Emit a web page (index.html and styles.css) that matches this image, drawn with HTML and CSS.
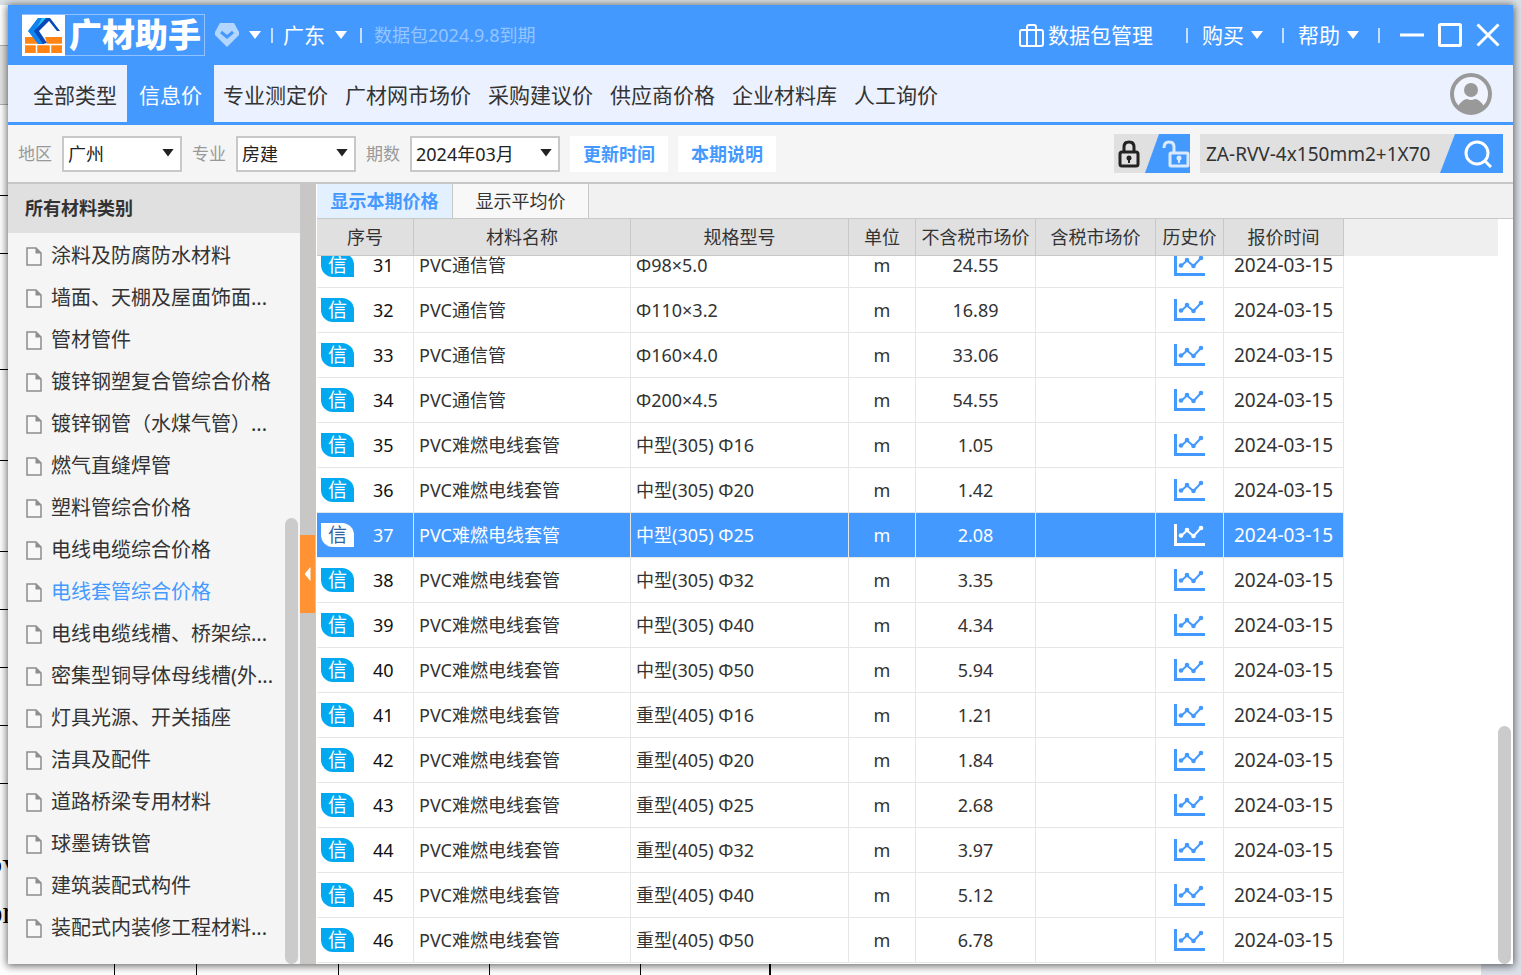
FILE: index.html
```html
<!DOCTYPE html>
<html lang="zh-CN">
<head>
    <meta charset="UTF-8">
    <meta name="viewport" content="width=device-width, initial-scale=1.0">
    <title>广材助手</title>
    <link rel="stylesheet" href="styles.css">
</head>
<body>

    <!-- Shared icons -->
    <svg class="sprite" aria-hidden="true">
        <symbol id="icon-doc" viewBox="0 0 16 19">
            <path d="M1 1H10L15 6V18H1Z" fill="#f8f8f8" stroke="#8c8c8c" stroke-width="1.5"/>
            <path d="M9.5 1V6.5H15Z" fill="#8c8c8c"/>
        </symbol>
        <symbol id="icon-chart" viewBox="0 0 31 22">
            <path d="M1.5 0V20.5H31" fill="none" stroke="currentColor" stroke-width="3"/>
            <path d="M7 12L13 6.500L19.500 12L27 4" fill="none" stroke="currentColor" stroke-width="2"/>
            <g fill="currentColor">
                <circle cx="7" cy="11.500" r="2.300"/>
                <circle cx="13" cy="6" r="2.300"/>
                <circle cx="19.500" cy="12" r="2.300"/>
                <circle cx="27" cy="4" r="2.300"/>
            </g>
        </symbol>
    </svg>

    <!-- Document behind the window -->
    <svg class="backdrop" aria-hidden="true">
        <rect width="100%" height="100%" fill="#ffffff"/>
        <rect width="100%" height="5" fill="#dbe2e6"/>
        <rect y="46" width="8" height="58" fill="#e4e4e4"/>
        <path d="M0 45.500H8M0 104.500H8" stroke="#b0b0b0"/>
        <path d="M0 195.500H8M0 253.500H8M0 369.500H8M0 460.500H8M0 551.500H8M0 609.500H8M0 667.500H8M0 725.500H8M0 783.500H8" stroke="#000000"/>
        <path d="M114.500 960V980M196.500 960V980M338.500 960V980M489.500 960V980M640.500 960V980" stroke="#000000"/>
        <path d="M770 960V980" stroke="#000000" stroke-width="2"/>
        <rect x="1481" y="5" width="60" height="100%" fill="#dce1ea"/>
        <text class="doc-text" x="-15" y="881">PV</text>
        <text class="doc-text" x="-13" y="923">or</text>
    </svg>

    <div class="window">

        <!-- Title bar -->
        <header class="title-bar">
            <a class="logo" href="#">
                <svg width="43" height="41" viewBox="0 0 43 41" aria-hidden="true">
                    <rect width="43" height="41" fill="#ffffff"/>
                    <path d="M3 22H11L17 29H25L31 22H40V38H3Z" fill="#ff8414"/>
                    <path d="M23 22H39L31 29L25 29Z" fill="#ff8414"/>
                    <path d="M3 29.500H40M14.500 29V38M28.500 29V38" stroke="#ffffff" stroke-width="1.5"/>
                    <path d="M16 3H28L17 15L6 17Z" fill="#25c4f5"/>
                    <path d="M6 16L16 3H20L13 16L22 29H16Z" fill="#1183ee"/>
                    <path d="M12 16L21 29L25 28L17 16L27 6L35 16H38L28 3H24Z" fill="#0848b8"/>
                </svg>
                <span class="logo-text">广材助手</span>
            </a>
            <button class="title-button vip" aria-label="会员">
                <svg width="24" height="24" viewBox="0 0 24 24" aria-hidden="true">
                    <path d="M5 0H19L24 9V12L12 24L0 12V9Z" fill="#b3d6ff"/>
                    <path d="M6 9L12 14L18 9" fill="none" stroke="#4499ff" stroke-width="3"/>
                </svg>
                <span class="caret"></span>
            </button>
            <span class="divider"></span>
            <button class="title-button region">广东 <span class="caret"></span></button>
            <span class="divider"></span>
            <span class="expire">数据包2024.9.8到期</span>

            <div class="title-actions">
                <button class="title-button package">
                    <svg width="25" height="23" viewBox="0 0 25 23" fill="none" stroke="#ffffff" stroke-width="2" aria-hidden="true">
                        <rect x="1" y="6" width="23" height="16" rx="2"/>
                        <path d="M8 22V3Q8 1 10 1H15Q17 1 17 3V22"/>
                    </svg>
                    数据包管理
                </button>
                <span class="divider"></span>
                <button class="title-button">购买 <span class="caret"></span></button>
                <span class="divider"></span>
                <button class="title-button">帮助 <span class="caret"></span></button>
                <span class="divider"></span>
            </div>

            <div class="window-controls">
                <button aria-label="最小化">
                    <svg width="24" height="24" viewBox="0 0 24 24"><path d="M0 12H24" stroke="#ffffff" stroke-width="3"/></svg>
                </button>
                <button aria-label="最大化">
                    <svg width="24" height="24" viewBox="0 0 24 24"><rect x="1.500" y="1.500" width="21" height="21" rx="1" fill="none" stroke="#ffffff" stroke-width="3"/></svg>
                </button>
                <button aria-label="关闭">
                    <svg width="24" height="24" viewBox="0 0 24 24"><path d="M1.500 1.500L22.500 22.500M22.500 1.500L1.500 22.500" stroke="#ffffff" stroke-width="3"/></svg>
                </button>
            </div>
        </header>

        <!-- Main navigation -->
        <nav class="main-nav">
            <a class="all" href="#">全部类型</a>
            <a class="active" href="#">信息价</a>
            <a href="#">专业测定价</a>
            <a href="#">广材网市场价</a>
            <a href="#">采购建议价</a>
            <a href="#">供应商价格</a>
            <a href="#">企业材料库</a>
            <a href="#">人工询价</a>
            <button class="avatar" aria-label="用户">
                <svg width="44" height="44" viewBox="0 0 44 44" aria-hidden="true">
                    <clipPath id="avatar-clip"><circle cx="22" cy="22" r="20"/></clipPath>
                    <circle cx="22" cy="22" r="19" fill="#f1f4ff" stroke="#999999" stroke-width="4"/>
                    <circle cx="22" cy="18" r="7" fill="#999999"/>
                    <path d="M9 44V34Q14 27 18 27Q22 29 26 27Q30 27 35 34V44Z" fill="#999999" clip-path="url(#avatar-clip)"/>
                </svg>
            </button>
        </nav>

        <!-- Filters -->
        <form class="filter-bar">
            <label for="region">地区</label>
            <span class="select-box">
                <select id="region"><option>广州</option></select>
            </span>
            <label for="major">专业</label>
            <span class="select-box">
                <select id="major"><option>房建</option></select>
            </span>
            <label for="period">期数</label>
            <span class="select-box wide">
                <select id="period"><option>2024年03月</option></select>
            </span>
            <button type="button" class="text-button">更新时间</button>
            <button type="button" class="text-button">本期说明</button>

            <div class="filter-right">
                <div class="lock-switch">
                    <button type="button" class="lock" aria-label="锁定">
                        <svg width="22" height="28" viewBox="0 0 22 28" aria-hidden="true">
                            <rect x="2" y="12" width="18" height="14" rx="2" fill="none" stroke="#222222" stroke-width="3"/>
                            <path d="M6 12V7Q6 2 11 2Q16 2 16 7V12" fill="none" stroke="#222222" stroke-width="3"/>
                            <circle cx="11" cy="18" r="2.500" fill="#222222"/>
                            <path d="M11 18V23" stroke="#222222" stroke-width="2"/>
                        </svg>
                    </button>
                    <button type="button" class="unlock" aria-label="解锁">
                        <svg width="28" height="28" viewBox="0 0 28 28" aria-hidden="true">
                            <rect x="8" y="13" width="18" height="13" rx="1" fill="none" stroke="#d9eaff" stroke-width="3"/>
                            <path d="M2 8Q2 2 7 2Q12 2 12 7V13" fill="none" stroke="#d9eaff" stroke-width="3"/>
                            <circle cx="17" cy="18" r="2.500" fill="#d9eaff"/>
                            <path d="M17 18V23" stroke="#d9eaff" stroke-width="2"/>
                        </svg>
                    </button>
                </div>
                <div class="search">
                    <input type="text" value="ZA-RVV-4x150mm2+1X70" aria-label="搜索材料">
                    <button type="button" aria-label="搜索">
                        <svg width="28" height="28" viewBox="0 0 28 28" fill="none" stroke="#ffffff" stroke-width="3" aria-hidden="true">
                            <circle cx="13" cy="13" r="11"/>
                            <path d="M20 20L27 27"/>
                        </svg>
                    </button>
                </div>
            </div>
        </form>

        <div class="content">

            <!-- Material categories -->
            <aside class="sidebar">
                <h2>所有材料类别</h2>
                <div class="category-area">
                    <ul class="categories">
                        <li><a href="#"><svg><use href="#icon-doc"/></svg>涂料及防腐防水材料</a></li>
                        <li><a href="#"><svg><use href="#icon-doc"/></svg>墙面、天棚及屋面饰面...</a></li>
                        <li><a href="#"><svg><use href="#icon-doc"/></svg>管材管件</a></li>
                        <li><a href="#"><svg><use href="#icon-doc"/></svg>镀锌钢塑复合管综合价格</a></li>
                        <li><a href="#"><svg><use href="#icon-doc"/></svg>镀锌钢管（水煤气管）...</a></li>
                        <li><a href="#"><svg><use href="#icon-doc"/></svg>燃气直缝焊管</a></li>
                        <li><a href="#"><svg><use href="#icon-doc"/></svg>塑料管综合价格</a></li>
                        <li><a href="#"><svg><use href="#icon-doc"/></svg>电线电缆综合价格</a></li>
                        <li><a class="active" href="#"><svg><use href="#icon-doc"/></svg>电线套管综合价格</a></li>
                        <li><a href="#"><svg><use href="#icon-doc"/></svg>电线电缆线槽、桥架综...</a></li>
                        <li><a href="#"><svg><use href="#icon-doc"/></svg>密集型铜导体母线槽(外...</a></li>
                        <li><a href="#"><svg><use href="#icon-doc"/></svg>灯具光源、开关插座</a></li>
                        <li><a href="#"><svg><use href="#icon-doc"/></svg>洁具及配件</a></li>
                        <li><a href="#"><svg><use href="#icon-doc"/></svg>道路桥梁专用材料</a></li>
                        <li><a href="#"><svg><use href="#icon-doc"/></svg>球墨铸铁管</a></li>
                        <li><a href="#"><svg><use href="#icon-doc"/></svg>建筑装配式构件</a></li>
                        <li><a href="#"><svg><use href="#icon-doc"/></svg>装配式内装修工程材料...</a></li>
                    </ul>
                    <div class="scroll-track"><div class="scroll-thumb category-thumb"></div></div>
                </div>
            </aside>

            <div class="splitter">
                <button aria-label="收起"></button>
            </div>

            <!-- Price table -->
            <main class="prices">
                <div class="tabs">
                    <button class="active">显示本期价格</button>
                    <button>显示平均价</button>
                </div>
                <div class="table-area">
                    <div class="table-scroll" id="table-scroll">
                        <table>
                            <colgroup>
                                <col class="col-index">
                                <col class="col-name">
                                <col class="col-spec">
                                <col class="col-unit">
                                <col class="col-price">
                                <col class="col-price">
                                <col class="col-history">
                                <col class="col-date">
                                <col>
                            </colgroup>
                            <thead>
                                <tr>
                                    <th>序号</th>
                                    <th>材料名称</th>
                                    <th>规格型号</th>
                                    <th>单位</th>
                                    <th>不含税市场价</th>
                                    <th>含税市场价</th>
                                    <th>历史价</th>
                                    <th>报价时间</th>
                                    <td class="rest"></td>
                                </tr>
                            </thead>
                            <tbody id="price-rows"></tbody>
                        </table>
                    </div>
                    <div class="scroll-track"><div class="scroll-thumb price-thumb"></div></div>
                </div>
            </main>
        </div>
    </div>

    <script src="script.js"></script>
</body>
</html>
```
FILE: styles.css
```css
* {
    box-sizing: border-box;
}

body {
    margin: 0;
    height: 100vh;
    padding: 5px 8px 11px;
    overflow: hidden;
    font-family: "Noto Sans", "Noto Sans CJK SC", sans-serif;
    font-size: 18px;
    line-height: 24px;
    color: #333333;
}

button,
input,
select {
    font: inherit;
    color: inherit;
    border: none;
    border-radius: 0;
    background: none;
    padding: 0;
    margin: 0;
}

a {
    color: inherit;
    text-decoration: none;
}

svg {
    display: block;
    flex: none;
}

.sprite {
    position: absolute;
    width: 0;
    height: 0;
}

/* Document behind the window */
.backdrop {
    position: absolute;
    top: 0;
    left: 0;
    width: 100%;
    height: 100%;
    z-index: -1;
}

.doc-text {
    font-family: "Liberation Serif", serif;
    font-size: 31px;
}

.window {
    display: flex;
    flex-direction: column;
    height: 100%;
    background-color: #f5f5f5;
    box-shadow: 0 1px 8px 1px rgba(0, 0, 0, 0.6);
}

/* Title bar */
.title-bar {
    display: flex;
    align-items: center;
    height: 60px;
    flex: none;
    padding: 0 13px 0 14px;
    background-color: #4499ff;
    color: white;
    font-size: 21px;
}

.logo {
    display: flex;
    align-items: center;
    height: 42px;
    padding-right: 3px;
    margin-right: 10px;
    border: 1px solid #8fc2ff;
    border-left: none;
}

.logo-text {
    margin-left: 4px;
    font-size: 33px;
    line-height: 40px;
    font-weight: 900;
}

.title-button {
    display: flex;
    align-items: center;
    gap: 10px;
    white-space: nowrap;
}

.caret {
    width: 12px;
    height: 8px;
    background-color: white;
    clip-path: polygon(0 0, 100% 0, 50% 100%);
}

.divider {
    width: 2px;
    height: 15px;
    margin: 0 10px;
    background-color: #c4deff;
}

.region + .divider {
    margin: 0 12px 0 13px;
}

.expire {
    color: #95c5ff;
    font-size: 18px;
}

.title-actions {
    display: flex;
    align-items: center;
    margin-left: auto;
}

.title-actions .divider {
    margin: 0 14px 0 19px;
}

.title-actions .title-button {
    gap: 7px;
}

.title-actions .package {
    gap: 4px;
    margin-right: 14px;
}

.window-controls {
    display: flex;
    gap: 14px;
    margin-left: 6px;
}

/* Main navigation */
.main-nav {
    display: flex;
    height: 60px;
    flex: none;
    padding-right: 20px;
    background-color: #ebf1ff;
    border-bottom: 3px solid #4499ff;
    font-size: 21px;
}

.main-nav a {
    display: flex;
    align-items: center;
    padding: 3px 8px 0 9px;
    white-space: nowrap;
}

.main-nav .all {
    padding-left: 25px;
    padding-right: 10px;
}

.main-nav .active {
    padding-left: 12px;
    padding-right: 12px;
    background-color: #4499ff;
    color: white;
}

.avatar {
    margin-left: auto;
}

/* Filters */
.filter-bar {
    display: flex;
    align-items: center;
    gap: 10px;
    height: 59px;
    flex: none;
    padding: 0 10px;
    border-bottom: 2px solid #c8c7c6;
}

.filter-bar label {
    color: #999999;
    font-size: 17px;
}

.select-box {
    position: relative;
    width: 120px;
}

.select-box.wide {
    width: 150px;
}

.select-box select {
    display: block;
    width: 100%;
    height: 36px;
    padding: 0 4px;
    border: 2px solid #c8c8c8;
    background-color: white;
    color: #222222;
    appearance: none;
}

.select-box::after {
    content: "";
    position: absolute;
    top: 13px;
    right: 8px;
    width: 12px;
    height: 8px;
    background-color: #222222;
    clip-path: polygon(0 0, 100% 0, 50% 100%);
    pointer-events: none;
}

.text-button {
    width: 98px;
    height: 36px;
    background-color: white;
    color: #4499ff;
    font-weight: bold;
}

.filter-right {
    display: flex;
    gap: 10px;
    margin-left: auto;
}

.lock-switch {
    display: flex;
    width: 76px;
    height: 39px;
    background-color: #e0e0e0;
}

.lock {
    width: 31px;
    padding-left: 4px;
}

.unlock {
    display: flex;
    align-items: center;
    justify-content: flex-end;
    width: 45px;
    background-color: #4499ff;
    clip-path: polygon(14px 0, 100% 0, 100% 100%, 0 100%);
}

.search {
    display: flex;
    width: 303px;
    height: 39px;
    background-color: #e0e0e0;
}

.search input {
    flex: 1;
    min-width: 0;
    padding: 0 0 0 6px;
    font-size: 19px;
}

.search button {
    display: flex;
    align-items: center;
    width: 63px;
    padding-left: 24px;
    background-color: #4499ff;
    clip-path: polygon(15px 0, 100% 0, 100% 100%, 0 100%);
}

/* Content */
.content {
    display: flex;
    flex: 1;
    min-height: 0;
}

.sidebar {
    display: flex;
    flex-direction: column;
    width: 292px;
    flex: none;
}

.sidebar h2 {
    margin: 0;
    padding-left: 17px;
    background-color: #e0e0e0;
    font-size: 18px;
    line-height: 49px;
}

.category-area {
    display: flex;
    flex: 1;
    min-height: 0;
}

.categories {
    flex: 1;
    margin: 0;
    padding: 2px 0 0 18px;
    list-style: none;
    font-size: 20px;
    overflow: hidden;
}

.categories a {
    display: flex;
    align-items: center;
    gap: 9px;
    height: 42px;
    white-space: nowrap;
}

.categories svg {
    width: 16px;
    height: 19px;
}

.categories .active {
    color: #4499ff;
}

.scroll-track {
    display: flex;
    flex-direction: column;
    justify-content: flex-end;
    width: 15px;
    flex: none;
}

.scroll-thumb {
    width: 13px;
    border-radius: 7px;
    background-color: #cbcbcb;
}

.category-thumb {
    height: 61%;
}

.splitter {
    display: flex;
    align-items: center;
    width: 16px;
    flex: none;
    background-color: #c8c7c6;
}

.splitter button {
    display: flex;
    align-items: center;
    justify-content: center;
    width: 15px;
    height: 78px;
    background-color: #ff9233;
}

.splitter button::before {
    content: "";
    width: 6px;
    height: 14px;
    background-color: white;
    clip-path: polygon(100% 0, 100% 100%, 0 50%);
}

/* Price table */
.prices {
    display: flex;
    flex-direction: column;
    flex: 1;
    min-width: 0;
    padding-left: 1px;
    background-color: white;
}

.tabs {
    display: flex;
    height: 35px;
    flex: none;
    background-color: #f1f1f1;
    border-bottom: 1px solid #c8c8c8;
}

.tabs button {
    width: 136px;
    border-right: 1px solid #c8c8c8;
    background-color: #f8f8f8;
}

.tabs .active {
    background-color: #e3f0ff;
    color: #4499ff;
    font-weight: bold;
}

.table-area {
    display: flex;
    flex: 1;
    min-height: 0;
}

.table-scroll {
    flex: 1;
    padding-bottom: 1px;
    overflow: auto;
    scrollbar-width: none;
}

table {
    width: 100%;
    table-layout: fixed;
    border-collapse: separate;
    border-spacing: 0;
}

.col-index { width: 97px; }
.col-name { width: 217px; }
.col-spec { width: 218px; }
.col-unit { width: 67px; }
.col-price { width: 120px; }
.col-history { width: 68px; }
.col-date { width: 120px; }

thead {
    position: sticky;
    top: 0;
    z-index: 1;
}

th {
    height: 37px;
    padding: 0;
    border-right: 1px solid #c8c8c8;
    border-bottom: 1px solid #c8c8c8;
    background-color: #e0e0e0;
    font-weight: normal;
    white-space: nowrap;
}

thead .rest {
    background-color: #efefef;
}

tbody td {
    height: 45px;
    padding: 0 5px;
    border-right: 1px solid #e6e6e6;
    border-bottom: 1px solid #e6e6e6;
    white-space: nowrap;
}

tbody .rest {
    border: none;
}

tbody .center {
    text-align: center;
}

.index {
    display: flex;
    align-items: center;
    gap: 19px;
    color: #111111;
}

.badge {
    width: 33px;
    height: 24px;
    margin-left: -1px;
    border-radius: 0 12px 0 12px;
    background-color: #03a9f0;
    color: white;
    font-size: 19px;
    line-height: 24px;
    text-align: center;
}

.history {
    display: block;
    color: #4499ff;
}

.history svg {
    width: 31px;
    height: 22px;
    margin: 0 auto;
}

.date {
    font-size: 19px;
}

.selected td:not(.rest) {
    background-color: #4499ff;
    color: white;
}

.selected .index,
.selected .history {
    color: white;
}

.selected .badge {
    background-color: white;
    color: #33639f;
}

.price-thumb {
    height: 32%;
}
```
FILE: script.js
```javascript
// Price list: [index, name, spec, price]
const prices = [
    [31, "PVC通信管", "Φ98×5.0", "24.55"],
    [32, "PVC通信管", "Φ110×3.2", "16.89"],
    [33, "PVC通信管", "Φ160×4.0", "33.06"],
    [34, "PVC通信管", "Φ200×4.5", "54.55"],
    [35, "PVC难燃电线套管", "中型(305) Φ16", "1.05"],
    [36, "PVC难燃电线套管", "中型(305) Φ20", "1.42"],
    [37, "PVC难燃电线套管", "中型(305) Φ25", "2.08"],
    [38, "PVC难燃电线套管", "中型(305) Φ32", "3.35"],
    [39, "PVC难燃电线套管", "中型(305) Φ40", "4.34"],
    [40, "PVC难燃电线套管", "中型(305) Φ50", "5.94"],
    [41, "PVC难燃电线套管", "重型(405) Φ16", "1.21"],
    [42, "PVC难燃电线套管", "重型(405) Φ20", "1.84"],
    [43, "PVC难燃电线套管", "重型(405) Φ25", "2.68"],
    [44, "PVC难燃电线套管", "重型(405) Φ32", "3.97"],
    [45, "PVC难燃电线套管", "重型(405) Φ40", "5.12"],
    [46, "PVC难燃电线套管", "重型(405) Φ50", "6.78"]
];
const selectedIndex = 37;

// Build the table rows
document.getElementById("price-rows").innerHTML = prices.map(([index, name, spec, price]) => `
    <tr class="${index === selectedIndex ? "selected" : ""}">
        <td><div class="index"><span class="badge">信</span>${index}</div></td>
        <td>${name}</td>
        <td>${spec}</td>
        <td class="center">m</td>
        <td class="center">${price}</td>
        <td></td>
        <td><a class="history" href="#" aria-label="历史价"><svg><use href="#icon-chart"/></svg></a></td>
        <td class="center date">2024-03-15</td>
        <td class="rest"></td>
    </tr>`).join("");

// Start at the end of the list
const tableScroll = document.getElementById("table-scroll");
tableScroll.scrollTop = tableScroll.scrollHeight;
```
